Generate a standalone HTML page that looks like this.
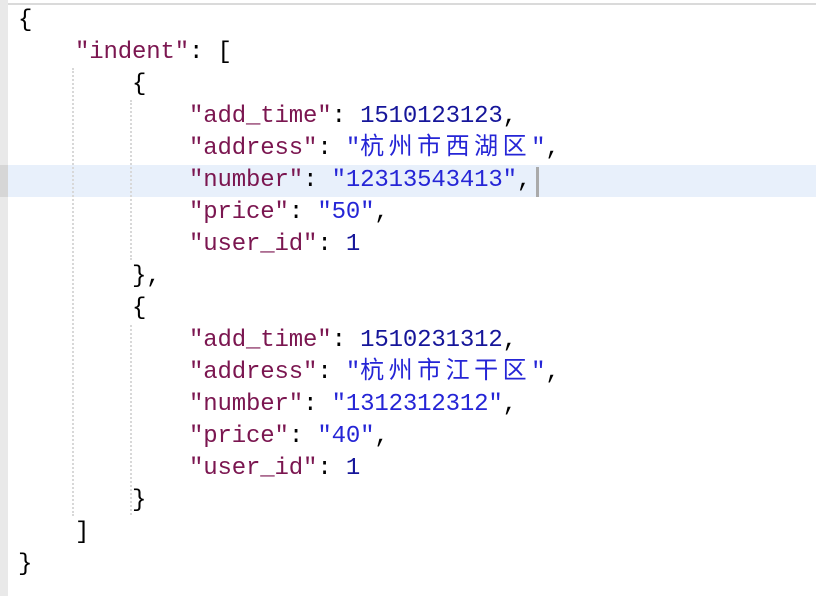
<!DOCTYPE html>
<html><head><meta charset="utf-8"><style>
html,body{margin:0;padding:0;background:#fff;width:816px;height:596px;overflow:hidden;position:relative}
.gut{position:absolute;left:0;top:0;width:8px;height:596px;background:#e9e9e9}
.topb{position:absolute;left:8px;top:3px;width:808px;height:2px;background:#dadada}
.hl{position:absolute;left:8px;top:165px;width:808px;height:32px;background:#e8f0fb}
.hlg{position:absolute;left:0;top:165px;width:8px;height:32px;background:#d6d6d6}
.cur{position:absolute;left:536px;top:167px;width:3px;height:30px;background:#aaa}
.g{position:absolute;width:0;border-left:2px dotted #d8d8d8}
pre{position:absolute;left:18px;top:5px;margin:0;font:24px/32px "Liberation Mono","Noto Sans CJK SC",monospace;color:#000;letter-spacing:-0.15px}
.k{color:#7b1650}.s{color:#2525d6}.n{color:#16169a}
.c{letter-spacing:4.5px}
</style></head><body>
<div class="gut"></div><div class="topb"></div><div class="hl"></div><div class="hlg"></div>
<div class="g" style="left:72px;top:68px;height:448px"></div>
<div class="g" style="left:130px;top:100px;height:160px"></div>
<div class="g" style="left:130px;top:325px;height:190px"></div>
<div class="cur"></div>
<pre>{
    <span class="k">"indent"</span>: [
        {
            <span class="k">"add_time"</span>: <span class="n">1510123123</span>,
            <span class="k">"address"</span>: <span class="s">"<span class="c">杭州市西湖区</span>"</span>,
            <span class="k">"number"</span>: <span class="s">"12313543413"</span>,
            <span class="k">"price"</span>: <span class="s">"50"</span>,
            <span class="k">"user_id"</span>: <span class="n">1</span>
        },
        {
            <span class="k">"add_time"</span>: <span class="n">1510231312</span>,
            <span class="k">"address"</span>: <span class="s">"<span class="c">杭州市江干区</span>"</span>,
            <span class="k">"number"</span>: <span class="s">"1312312312"</span>,
            <span class="k">"price"</span>: <span class="s">"40"</span>,
            <span class="k">"user_id"</span>: <span class="n">1</span>
        }
    ]
}</pre>
</body></html>
